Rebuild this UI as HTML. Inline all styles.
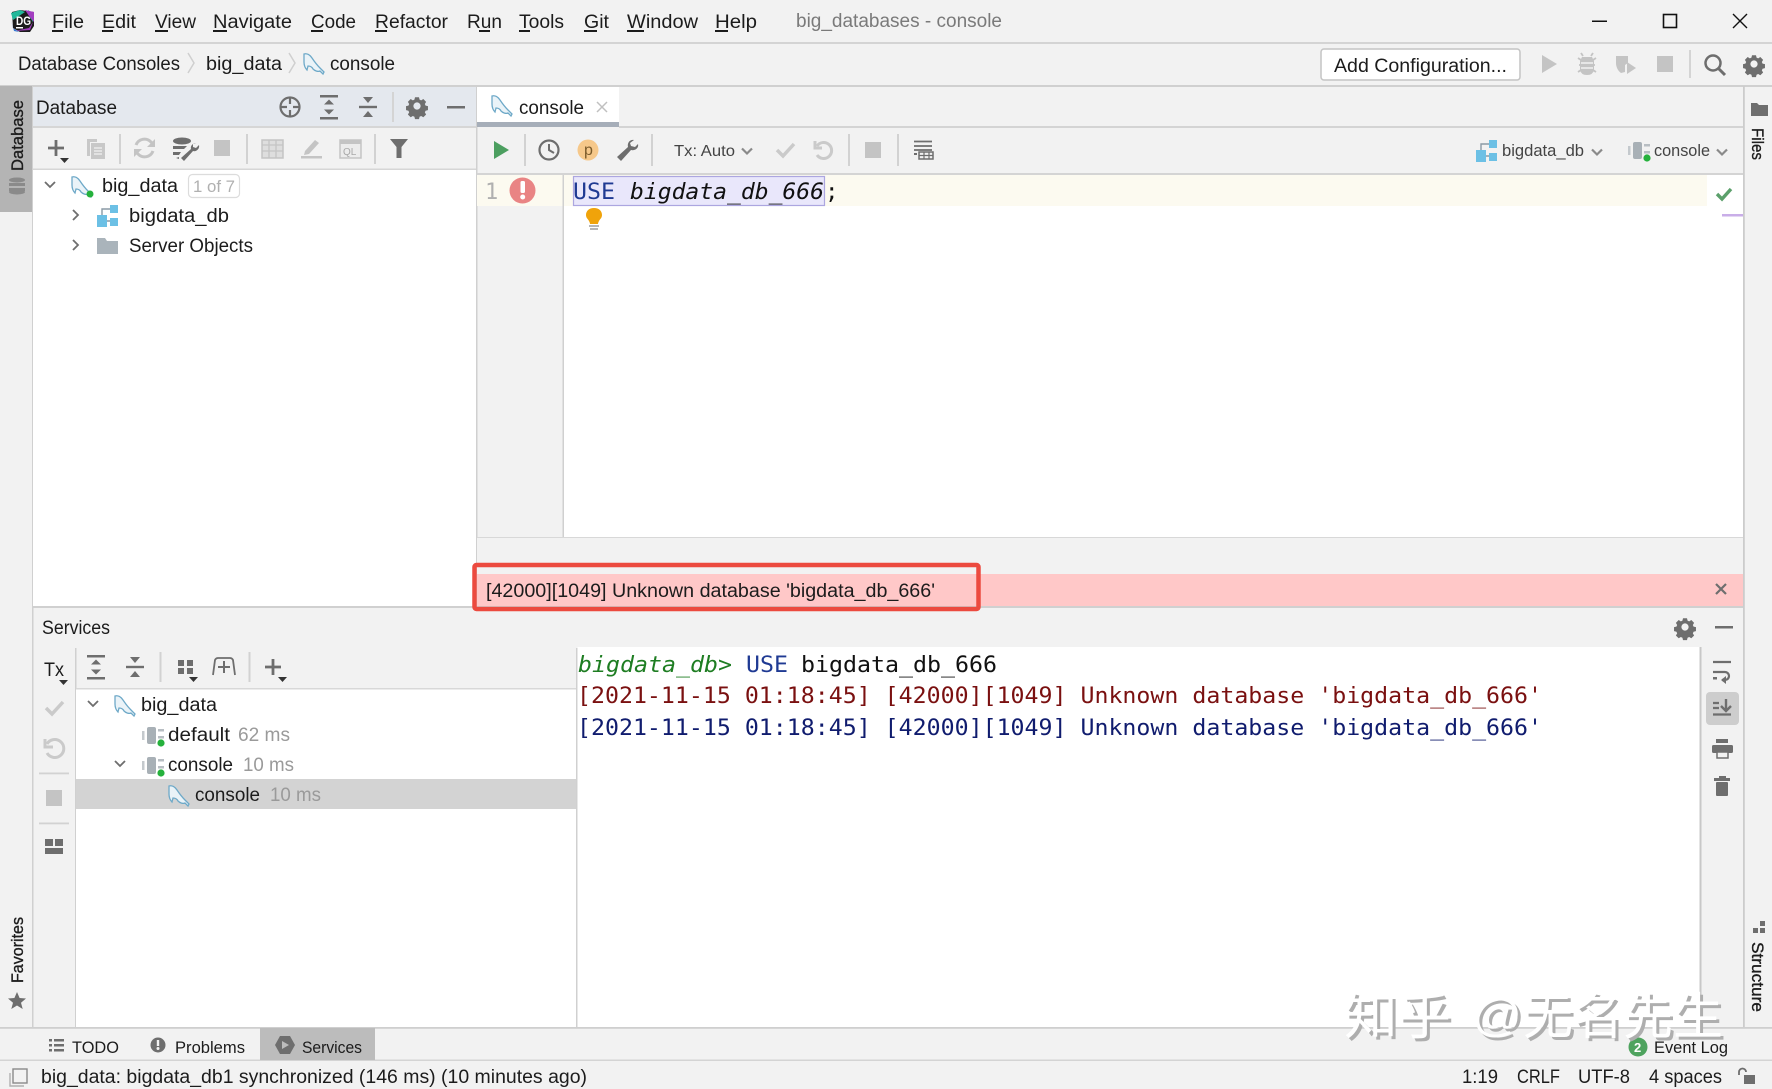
<!DOCTYPE html>
<html><head><meta charset="utf-8"><title>big_databases - console</title>
<style>
html,body{margin:0;padding:0;background:#f2f2f2;overflow:hidden}
svg{display:block}
text{font-family:"Liberation Sans","Noto Sans CJK SC",sans-serif;font-size:19px;fill:#1c1c1c}
.m{font-family:"DejaVu Sans Mono","Liberation Mono",monospace;font-size:22.5px}
.g{fill:#9a9a9a}
.s{font-size:17px}
.v{font-size:17px;stroke:#1c1c1c;stroke-width:.35}
.sp{fill:#d2d2d2}
</style></head><body>
<svg xmlns="http://www.w3.org/2000/svg" width="1772" height="1089" viewBox="0 0 1772 1089">
<defs>
<g id="dol"><path d="M1 1c3-1 6 1 8 4 2 3 5 7 8 10l4 4-1 2-3-3c-2 1-5 0-7-2-1-2-3-3-5-3l-1 4c-2-2-3-5-3-8 0-3 0-6 0-8z" fill="#eaf3f8" stroke="#6ea9c8" stroke-width="1.300"/></g>
<g id="conn"><rect x="6" y="0" width="9" height="17" rx="2" fill="#a8b0b6"/><rect x="1" y="4" width="2.500" height="9" fill="#c4c9cd"/><rect x="17" y="2" width="6" height="2.500" fill="#b8bec3"/><rect x="17" y="9" width="6" height="2.500" fill="#b8bec3"/><circle cx="20" cy="16" r="3.600" fill="#25b13c"/></g>
<g id="sch"><rect x="0" y="10" width="10" height="12" fill="#6cc0e5"/><rect x="13" y="0" width="8" height="8" fill="#6cc0e5"/><rect x="13" y="13" width="8" height="8" fill="#6cc0e5"/><path d="M5 10V4h8M10 16h3" stroke="#8a9aa5" stroke-width="1.400" fill="none"/></g>
<g id="gear"><path transform="scale(.8)" fill-rule="evenodd" d="M-2.500-11h5l.7 3 2 .9 2.700-1.600 3.500 3.500-1.600 2.700.9 2 3 .7v5l-3 .7-.9 2 1.600 2.700-3.500 3.500-2.700-1.600-2 .9-.7 3h-5l-.7-3-2-.9-2.700 1.600-3.500-3.500 1.600-2.700-.9-2-3-.7v-5l3-.7.9-2-1.600-2.700 3.500-3.500 2.700 1.600 2-.9zM0-4.500a4.500 4.500 0 1 0 .01 0z" fill="#6e6e6e"/></g>
<g id="exp" fill="#6e6e6e"><rect x="-9" y="-12" width="18" height="2.500"/><rect x="-9" y="10" width="18" height="2.500"/><path d="M0-7.500l5 5h-10zM0 7.500l5-5h-10z"/></g>
<g id="col" fill="#6e6e6e"><rect x="-9" y="-1.200" width="18" height="2.400"/><path d="M-5-10h10l-5 6zM-5 10h10l-5-6z"/></g>
<g id="chd"><path d="M-5-3l5 5 5-5" fill="none" stroke="#6e6e6e" stroke-width="1.800"/></g>
<g id="chr"><path d="M-3-5l5 5-5 5" fill="none" stroke="#6e6e6e" stroke-width="1.800"/></g>
<g id="chs"><path d="M-5-2.500l5 5 5-5" fill="none" stroke="#8a8a8a" stroke-width="2.200"/></g>
</defs>

<rect width="1772" height="1089" fill="#f2f2f2"/>

<!-- title bar -->
<rect x="0" y="42" width="1772" height="2" fill="#d4d4d4"/>
<path d="M12 12l8-2 14 2 0 14-4 6-10 0-7-4z" fill="#1c1c1c"/>
<path d="M11 13l9-3 5 2-12 8zM28 10l6 4-1 8-4-6z" fill="#22b89a"/><path d="M25 10l9 2 0 10-5-6zM14 31l16-1 3-8-4 6z" fill="#a23dc0"/><path d="M11 20l2 8 6 4-5-1z" fill="#3a7bd5"/>
<text x="16" y="25" style="font-size:11.500px;font-weight:bold;fill:#fff" textLength="15" lengthAdjust="spacingAndGlyphs">DG</text><rect x="16" y="27" width="7" height="1.500" fill="#fff"/>

<text x="52" y="28" textLength="32" lengthAdjust="spacingAndGlyphs">File</text><rect x="52" y="30" width="11" height="2" fill="#1c1c1c"/>
<text x="102" y="28" textLength="34" lengthAdjust="spacingAndGlyphs">Edit</text><rect x="102" y="30" width="11" height="2" fill="#1c1c1c"/>
<text x="155" y="28" textLength="41" lengthAdjust="spacingAndGlyphs">View</text><rect x="155" y="30" width="13" height="2" fill="#1c1c1c"/>
<text x="213" y="28" textLength="79" lengthAdjust="spacingAndGlyphs">Navigate</text><rect x="213" y="30" width="14" height="2" fill="#1c1c1c"/>
<text x="311" y="28" textLength="45" lengthAdjust="spacingAndGlyphs">Code</text><rect x="311" y="30" width="12" height="2" fill="#1c1c1c"/>
<text x="375" y="28" textLength="73" lengthAdjust="spacingAndGlyphs">Refactor</text><rect x="375" y="30" width="12" height="2" fill="#1c1c1c"/>
<text x="467" y="28" textLength="35" lengthAdjust="spacingAndGlyphs">Run</text><rect x="479" y="30" width="11" height="2" fill="#1c1c1c"/>
<text x="519" y="28" textLength="45" lengthAdjust="spacingAndGlyphs">Tools</text><rect x="519" y="30" width="11" height="2" fill="#1c1c1c"/>
<text x="584" y="28" textLength="25" lengthAdjust="spacingAndGlyphs">Git</text><rect x="584" y="30" width="13" height="2" fill="#1c1c1c"/>
<text x="627" y="28" textLength="71" lengthAdjust="spacingAndGlyphs">Window</text><rect x="627" y="30" width="17" height="2" fill="#1c1c1c"/>
<text x="715" y="28" textLength="42" lengthAdjust="spacingAndGlyphs">Help</text><rect x="715" y="30" width="13" height="2" fill="#1c1c1c"/>
<text x="796" y="27" textLength="206" lengthAdjust="spacingAndGlyphs" style="fill:#7a7a7a">big_databases - console</text>

<rect x="1592" y="20.500" width="15" height="1.500" fill="#111"/>
<rect x="1663.500" y="14.500" width="13" height="13" fill="none" stroke="#111" stroke-width="1.600"/>
<path d="M1733 14l14 14M1747 14l-14 14" stroke="#111" stroke-width="1.400"/>

<!-- breadcrumb -->
<text x="18" y="70" textLength="162" lengthAdjust="spacingAndGlyphs">Database Consoles</text>
<path d="M188 53l6 10-6 10" fill="none" stroke="#cfcfcf" stroke-width="1.500"/>
<text x="206" y="70" textLength="76" lengthAdjust="spacingAndGlyphs">big_data</text>
<path d="M289 53l6 10-6 10" fill="none" stroke="#cfcfcf" stroke-width="1.500"/>
<use href="#dol" x="303" y="53"/>
<text x="330" y="70" textLength="65" lengthAdjust="spacingAndGlyphs">console</text>

<rect x="1321" y="49" width="199" height="31" rx="3" fill="#fff" stroke="#c4c4c4" stroke-width="1.500"/>
<text x="1334" y="72" textLength="173" lengthAdjust="spacingAndGlyphs">Add Configuration...</text>
<path d="M1542 55l15 9-15 9z" fill="#c4c4c4"/>
<path d="M1583 56l-2-3M1591 56l2-3M1581 60l-3-2M1593 60l3-2M1579 65h4M1591 65h4M1581 70l-3 2M1593 70l3 2" stroke="#c4c4c4" stroke-width="1.800"/><path d="M1582 57h10l2 4v9q-1 5-7 5t-7-5v-9z" fill="#c4c4c4"/><path d="M1581 63h12M1581 68h12" stroke="#f2f2f2" stroke-width="1.500"/>
<path d="M1616 56h12v7l-3 2v7l-4 1c-3-2-5-6-5-10z" fill="#c4c4c4"/><path d="M1627 62l9 6-9 6z" fill="#c4c4c4"/>
<rect x="1657" y="56" width="16" height="16" fill="#c4c4c4"/>
<rect x="1689" y="50" width="2" height="28" fill="#d4d4d4"/>
<circle cx="1713" cy="63" r="7.500" fill="none" stroke="#6e6e6e" stroke-width="2.500"/><path d="M1718 68l7 7" stroke="#6e6e6e" stroke-width="3"/>
<use href="#gear" x="1754" y="64"/>
<rect x="0" y="85" width="1772" height="2" fill="#d0d0d0"/>

<!-- left strip -->
<rect x="0" y="86" width="33" height="126" fill="#b4b4b4"/>
<rect x="32" y="86" width="1.500" height="942" fill="#d0d0d0"/>
<text class="v" transform="translate(23,171) rotate(-90)" textLength="71" lengthAdjust="spacingAndGlyphs">Database</text>
<g fill="#8a8a8a"><ellipse cx="17" cy="180" rx="8" ry="2.500"/><rect x="9" y="183" width="16" height="3"/><rect x="9" y="188" width="16" height="3"/><ellipse cx="17" cy="192" rx="8" ry="2.500"/></g>
<text class="v" transform="translate(23,983) rotate(-90)" textLength="66" lengthAdjust="spacingAndGlyphs">Favorites</text>
<path d="M17 992l2.600 6 6.400.5-5 4.200 1.700 6.300-5.700-3.500-5.700 3.500 1.700-6.300-5-4.200 6.400-.5z" fill="#6e6e6e"/>

<!-- database panel -->
<rect x="33" y="87" width="443" height="40" fill="#e4e8ee"/>
<rect x="33" y="126" width="443" height="2" fill="#d6d6d6"/>
<text x="36" y="114" textLength="81" lengthAdjust="spacingAndGlyphs">Database</text>
<circle cx="290" cy="107" r="9.500" fill="none" stroke="#6e6e6e" stroke-width="2.200"/><path d="M290 97v7M290 110v7M280 107h7M293 107h7" stroke="#6e6e6e" stroke-width="2.200"/>
<use href="#exp" x="329" y="107"/><use href="#col" x="368" y="107"/>
<rect x="392" y="92" width="2" height="30" fill="#d4d4d4"/>
<use href="#gear" x="417" y="106"/>
<rect x="447" y="106" width="18" height="2.500" fill="#6e6e6e"/>

<rect x="33" y="128" width="443" height="41" fill="#f2f2f2"/>
<rect x="33" y="168.500" width="443" height="1.500" fill="#d6d6d6"/>
<path d="M48 148h16M56 140v16" stroke="#6e6e6e" stroke-width="2.800"/><path d="M60 158h9l-4.500 5z" fill="#333"/>
<path d="M87 139h10v3h-7v14h-3z" fill="#c8c8c8"/><rect x="91" y="143" width="14" height="16" fill="#c8c8c8"/><path d="M94 148h8M94 151h8M94 154h8" stroke="#f2f2f2" stroke-width="1.200"/>
<rect x="119" y="134" width="2" height="30" class="sp"/>
<path d="M136 145a9 9 0 0 1 15-3l2 2M153 151a9 9 0 0 1-15 3l-2-2" fill="none" stroke="#c4c4c4" stroke-width="3"/><path d="M155 139v8h-8zM134 157v-8h8z" fill="#c4c4c4"/>
<ellipse cx="182" cy="141" rx="9" ry="3.500" fill="#6e6e6e"/><path d="M173 146l14 0-3 3h-11zM173 152l8 0-2 3h-6zM176 158l3-1 0 2z" fill="#6e6e6e"/>
<path d="M196 143c-3 0-6 3-5 6l-10 9 3 3 9-10c3 1 7-2 6-6l-3 3-3-1 0-3z" fill="#6e6e6e"/>
<rect x="214" y="140" width="16" height="16" fill="#c4c4c4"/>
<rect x="246" y="134" width="2" height="30" class="sp"/>
<rect x="262" y="140" width="21" height="18" fill="#dedede" stroke="#c4c4c4" stroke-width="1.500"/><path d="M262 145h21M262 151h21M269 140v18M276 140v18" stroke="#c4c4c4" stroke-width="1.300"/>
<path d="M305 151l10-11 4 3-10 11-5 1z" fill="#c4c4c4"/><rect x="301" y="156" width="21" height="2.500" fill="#c4c4c4"/>
<rect x="340" y="140" width="21" height="18" fill="#ececec" stroke="#c4c4c4" stroke-width="1.500"/><rect x="340" y="140" width="21" height="4" fill="#c4c4c4"/><text x="343" y="155" style="font-size:10px;fill:#a8a8a8">QL</text>
<rect x="374" y="134" width="2" height="30" class="sp"/>
<path d="M390 139h18l-6.500 8v11h-5v-11z" fill="#6e6e6e"/>

<rect x="33" y="170" width="443" height="436" fill="#fff"/>
<use href="#chd" x="50" y="185"/>
<use href="#dol" x="71" y="176"/><circle cx="90" cy="194" r="3.500" fill="#25b13c"/>
<text x="102" y="192" textLength="76" lengthAdjust="spacingAndGlyphs">big_data</text>
<rect x="188.500" y="174.500" width="51" height="23" rx="4" fill="#fff" stroke="#dcdcdc" stroke-width="1.200"/>
<text x="193" y="192" textLength="42" lengthAdjust="spacingAndGlyphs" style="font-size:17px;fill:#b0b0b0">1 of 7</text>
<use href="#chr" x="76" y="215"/><use href="#sch" x="97" y="205"/>
<text x="129" y="222" textLength="100" lengthAdjust="spacingAndGlyphs">bigdata_db</text>
<use href="#chr" x="76" y="245"/>
<path d="M97 238h8l2 3h11v13h-21z" fill="#aab4bb"/>
<text x="129" y="252" textLength="124" lengthAdjust="spacingAndGlyphs">Server Objects</text>

<!-- vertical divider -->
<rect x="476" y="86" width="1.500" height="521" fill="#d0d0d0"/>

<!-- editor tabs -->
<rect x="477" y="87" width="142" height="36" fill="#fff"/>
<rect x="477" y="122" width="142" height="5" fill="#a6aeb9"/>
<rect x="619" y="126" width="1125" height="2" fill="#d4d4d4"/>
<use href="#dol" x="491" y="95"/>
<text x="519" y="114" textLength="65" lengthAdjust="spacingAndGlyphs">console</text>
<path d="M597 102l10 10M607 102l-10 10" stroke="#c0c0c0" stroke-width="1.500"/>

<!-- editor toolbar -->
<path d="M494 141l15 9-15 9z" fill="#4c9f60"/>
<rect x="524" y="134" width="2" height="32" class="sp"/>
<circle cx="549" cy="150" r="9.500" fill="none" stroke="#6e6e6e" stroke-width="2.200"/><path d="M549 144v6l5 3" fill="none" stroke="#6e6e6e" stroke-width="2"/>
<circle cx="588" cy="150" r="10.500" fill="#f6c88a"/><text x="584" y="155" style="font-size:16px;fill:#7a5a2a">p</text>
<path d="M634 140c-4-1-7 3-6 7l-11 10 4 4 10-11c4 1 8-2 7-6l-3 3-4-1-1-3z" fill="#6e6e6e"/>
<rect x="651" y="134" width="2" height="32" class="sp"/>
<text x="674" y="156" textLength="61" lengthAdjust="spacingAndGlyphs" style="font-size:16px;fill:#444">Tx: Auto</text>
<use href="#chs" x="747" y="151"/>
<path d="M777 150l6 6 11-12" fill="none" stroke="#cacaca" stroke-width="3.500"/>
<path d="M817 146a8 8 0 1 1 0 9M815 141v7h7" fill="none" stroke="#cacaca" stroke-width="3"/>
<rect x="848" y="134" width="2" height="32" class="sp"/>
<rect x="865" y="142" width="16" height="16" fill="#c4c4c4"/>
<rect x="897" y="134" width="2" height="32" class="sp"/>
<path d="M914 141.500h18M914 146h18M914 150h18" stroke="#6e6e6e" stroke-width="1.800"/><rect x="919" y="152" width="14" height="7" fill="none" stroke="#6e6e6e" stroke-width="1.500"/><path d="M924 152v7M929 152v7M919 155.500h14" stroke="#6e6e6e" stroke-width="1.200"/><rect x="914" y="153" width="3" height="2" fill="#6e6e6e"/>
<use href="#sch" x="1476" y="140"/>
<text x="1502" y="156" textLength="82" lengthAdjust="spacingAndGlyphs" style="font-size:17px;fill:#444">bigdata_db</text>
<use href="#chs" x="1597" y="152"/>
<use href="#conn" x="1627" y="142"/>
<text x="1654" y="156" textLength="56" lengthAdjust="spacingAndGlyphs" style="font-size:17px;fill:#444">console</text>
<use href="#chs" x="1722" y="152"/>
<rect x="477" y="173" width="1267" height="2" fill="#d4d4d4"/>

<!-- editor -->
<rect x="564" y="175" width="1180" height="363" fill="#fff"/>
<rect x="477" y="175" width="1230" height="31" fill="#fcfaf0"/>
<rect x="562.500" y="175" width="1.500" height="363" fill="#d0d0d0"/>
<text x="485" y="199" style="font-size:22px;fill:#b0b0b0;font-family:'DejaVu Sans Mono',monospace">1</text>
<circle cx="522.500" cy="190.500" r="13" fill="#e98484"/><rect x="520.500" y="181" width="4.500" height="12" rx="1.500" fill="#fff"/><circle cx="522.700" cy="197" r="2.500" fill="#fff"/>
<rect x="573.500" y="176.500" width="251" height="29" fill="#e9e7fb" stroke="#aca6e0" stroke-width="1.200"/>
<text class="m" x="573" y="199" textLength="42" lengthAdjust="spacingAndGlyphs" style="fill:#1f3a93">USE</text>
<text class="m" x="630" y="199" textLength="194" lengthAdjust="spacingAndGlyphs" style="font-style:italic;fill:#111">bigdata_db_666</text>
<text class="m" x="825" y="199" style="fill:#111">;</text>
<path d="M594 208c5 0 8 3 8 7 0 3-2 4-3 6-.5 1-1 2-1 3h-8c0-1-.5-2-1-3-1-2-3-3-3-6 0-4 3-7 8-7z" fill="#f0a30a"/><path d="M589 226h10M590 229h8" stroke="#8a8a8a" stroke-width="1.300"/>
<path d="M1717 194l5 5 9-10" fill="none" stroke="#5ba06b" stroke-width="3.400"/>
<rect x="1722" y="214" width="22" height="2.500" fill="#c9aee8"/>

<!-- editor footer & error -->
<rect x="477" y="537" width="1267" height="1.500" fill="#d8d8d8"/>
<rect x="477" y="538" width="1267" height="36" fill="#f2f2f2"/>
<rect x="477" y="574" width="1267" height="32" fill="#ffc8c8"/>
<rect x="33" y="606" width="1711" height="2" fill="#d0d0d0"/>
<rect x="474.500" y="565" width="504" height="44" rx="2" fill="none" stroke="#ec4a3f" stroke-width="4.500"/>
<text x="486" y="597" textLength="449" lengthAdjust="spacingAndGlyphs">[42000][1049] Unknown database 'bigdata_db_666'</text>
<path d="M1716 584l10 10M1726 584l-10 10" stroke="#6e6e6e" stroke-width="2.200"/>

<!-- services -->
<text x="42" y="634" textLength="68" lengthAdjust="spacingAndGlyphs">Services</text>
<use href="#gear" x="1685" y="627"/>
<rect x="1715" y="626" width="18" height="2.500" fill="#6e6e6e"/>

<rect x="75" y="648" width="1.500" height="380" fill="#d0d0d0"/>
<text x="44" y="676" textLength="20" lengthAdjust="spacingAndGlyphs">Tx</text><path d="M59 680h9l-4.500 5z" fill="#333"/>
<path d="M46 708l6 6 11-12" fill="none" stroke="#cacaca" stroke-width="3.500"/>
<path d="M47 744a9 9 0 1 1 0 9M45 739v8h8" fill="none" stroke="#cacaca" stroke-width="3"/>
<rect x="39" y="772.500" width="30" height="1.800" fill="#d2d2d2"/>
<rect x="46" y="790" width="16" height="16" fill="#c4c4c4"/>
<rect x="39" y="822.500" width="30" height="1.800" fill="#d2d2d2"/>
<path d="M45 839h8v7h-8zM55 839h8v7h-8zM45 848h18v6h-18z" fill="#6e6e6e"/>

<rect x="76" y="688" width="500" height="1.500" fill="#d8d8d8"/>
<use href="#exp" x="96" y="667"/><use href="#col" x="135" y="667"/>
<rect x="159.500" y="652" width="2" height="30" class="sp"/>
<path d="M178 660h6v6h-6zM187 660h6v6h-6zM178 668h6v6h-6zM187 668h6v6h-6z" fill="#6e6e6e"/><path d="M189 677h9l-4.500 5z" fill="#333"/>
<path d="M213 675l2-15q1-2 3-2h12q2 0 3 2l2 15" fill="none" stroke="#6e6e6e" stroke-width="1.800"/><path d="M218 667h12M224 661v12" stroke="#6e6e6e" stroke-width="2"/>
<rect x="248.500" y="652" width="2" height="30" class="sp"/>
<path d="M265 667h16M273 659v16" stroke="#6e6e6e" stroke-width="2.800"/><path d="M278 677h9l-4.500 5z" fill="#333"/>

<rect x="76" y="689.500" width="500" height="338.500" fill="#fff"/>
<rect x="76" y="779" width="500" height="30" fill="#d3d3d3"/>
<use href="#chd" x="93" y="704"/>
<use href="#dol" x="114" y="695"/>
<text x="141" y="711" textLength="76" lengthAdjust="spacingAndGlyphs">big_data</text>
<use href="#conn" x="141" y="727"/>
<text x="168" y="741" textLength="62" lengthAdjust="spacingAndGlyphs">default</text>
<text class="g" x="238" y="741" textLength="52" lengthAdjust="spacingAndGlyphs">62 ms</text>
<use href="#chd" x="120" y="764"/>
<use href="#conn" x="141" y="757"/>
<text x="168" y="771" textLength="65" lengthAdjust="spacingAndGlyphs">console</text>
<text class="g" x="243" y="771" textLength="51" lengthAdjust="spacingAndGlyphs">10 ms</text>
<use href="#dol" x="168" y="785"/>
<text x="195" y="801" textLength="65" lengthAdjust="spacingAndGlyphs">console</text>
<text class="g" x="270" y="801" textLength="51" lengthAdjust="spacingAndGlyphs">10 ms</text>

<!-- console -->
<rect x="576" y="648" width="1.500" height="380" fill="#d0d0d0"/>
<rect x="577.500" y="647" width="1122.500" height="381" fill="#fff"/>
<rect x="1699.500" y="647" width="2" height="381" fill="#c8c8c8"/>
<text class="m" x="578" y="672" textLength="154" lengthAdjust="spacingAndGlyphs" style="font-style:italic;fill:#1e7d22">bigdata_db&gt;</text>
<text class="m" x="746" y="672" textLength="42" lengthAdjust="spacingAndGlyphs" style="fill:#1f3a93">USE</text>
<text class="m" x="801" y="672" textLength="196" lengthAdjust="spacingAndGlyphs" style="fill:#111">bigdata_db_666</text>
<text class="m" x="577" y="703" textLength="965" lengthAdjust="spacingAndGlyphs" style="fill:#7a1010">[2021-11-15 01:18:45] [42000][1049] Unknown database 'bigdata_db_666'</text>
<text class="m" x="577" y="735" textLength="965" lengthAdjust="spacingAndGlyphs" style="fill:#101c6e">[2021-11-15 01:18:45] [42000][1049] Unknown database 'bigdata_db_666'</text>

<!-- console right toolbar -->
<path d="M1713 662h18M1713 672h12a4 4 0 0 1 0 8h-3" fill="none" stroke="#6e6e6e" stroke-width="2.200"/><path d="M1721 680l5-4v8z" fill="#6e6e6e"/><rect x="1713" y="677" width="4" height="2.500" fill="#6e6e6e"/>
<rect x="1706" y="692" width="33" height="33" rx="4" fill="#cdcdcd"/>
<path d="M1713 703h6M1713 708h6M1713 714.500h18" stroke="#6e6e6e" stroke-width="2.200"/><path d="M1726 699v11M1721 706l5 5 5-5" fill="none" stroke="#6e6e6e" stroke-width="2.400"/>
<rect x="1716" y="739" width="12" height="4" fill="#6e6e6e"/><rect x="1712" y="745" width="21" height="8" rx="1.500" fill="#6e6e6e"/><rect x="1717" y="752" width="11" height="6" fill="#f2f2f2" stroke="#6e6e6e" stroke-width="1.500"/>
<rect x="1719" y="776" width="7" height="3" fill="#6e6e6e"/><rect x="1714" y="778" width="16" height="3" fill="#6e6e6e"/><rect x="1716" y="782" width="12" height="14" rx="1" fill="#6e6e6e"/>

<!-- right strip -->
<rect x="1743" y="86" width="1.800" height="942" fill="#cccccc"/>
<path d="M1751 103h6l2 2h9v11h-17z" fill="#6e6e6e"/>
<text class="v" transform="translate(1752,128) rotate(90)" textLength="32" lengthAdjust="spacingAndGlyphs">Files</text>
<path d="M1753 928h5v5h-5zM1760 928h5v5h-5zM1760 921h5v5h-5z" fill="#6e6e6e"/>
<text class="v" transform="translate(1752,942) rotate(90)" textLength="70" lengthAdjust="spacingAndGlyphs">Structure</text>

<!-- bottom tool strip -->
<rect x="0" y="1027" width="1772" height="1.800" fill="#cfcfcf"/>
<rect x="0" y="1059.500" width="1772" height="1.500" fill="#d4d4d4"/>
<rect x="260" y="1028" width="115" height="32" fill="#bcbcbc"/>
<path d="M49 1039h3v2.500h-3zM54 1039h10v2.500h-10zM49 1044h3v2.500h-3zM54 1044h10v2.500h-10zM49 1049h3v2.500h-3zM54 1049h10v2.500h-10z" fill="#6e6e6e"/>
<text class="s" x="72" y="1053" textLength="47" lengthAdjust="spacingAndGlyphs">TODO</text>
<circle cx="158" cy="1045" r="7.500" fill="#6e6e6e"/><rect x="156.800" y="1040" width="2.400" height="6" fill="#f2f2f2"/><circle cx="158" cy="1048.500" r="1.500" fill="#f2f2f2"/>
<text class="s" x="175" y="1053" textLength="70" lengthAdjust="spacingAndGlyphs">Problems</text>
<path d="M280 1036h10l5 9-5 9h-10l-5-9z" fill="#6e6e6e"/><path d="M282 1041l7 4-7 4z" fill="#bcbcbc"/>
<text class="s" x="302" y="1053" textLength="60" lengthAdjust="spacingAndGlyphs">Services</text>
<circle cx="1638" cy="1047" r="9.500" fill="#4ea35e"/><text x="1634" y="1052" style="font-size:13px;font-weight:bold;fill:#fff">2</text>
<text class="s" x="1654" y="1053" textLength="74" lengthAdjust="spacingAndGlyphs">Event Log</text>

<!-- status -->
<rect x="13" y="1069" width="14" height="14" fill="none" stroke="#8a8a8a" stroke-width="1.400"/><path d="M10 1073v13h14" fill="none" stroke="#b0b0b0" stroke-width="1.400"/>
<text x="41" y="1083" textLength="546" lengthAdjust="spacingAndGlyphs">big_data: bigdata_db1 synchronized (146 ms) (10 minutes ago)</text>
<text x="1462" y="1083" textLength="36" lengthAdjust="spacingAndGlyphs">1:19</text>
<text x="1517" y="1083" textLength="43" lengthAdjust="spacingAndGlyphs">CRLF</text>
<text x="1578" y="1083" textLength="52" lengthAdjust="spacingAndGlyphs">UTF-8</text>
<text x="1649" y="1083" textLength="73" lengthAdjust="spacingAndGlyphs">4 spaces</text>
<path d="M1739 1075v-3a3.500 3.500 0 0 1 7 0" fill="none" stroke="#6e6e6e" stroke-width="1.800"/><rect x="1744" y="1075" width="11" height="9" fill="#6e6e6e"/>

<!-- watermark -->
<text x="1347" y="1037" textLength="107" lengthAdjust="spacingAndGlyphs" style="font-size:50px;fill:#aeaeae">知乎</text>
<text x="1475" y="1034" textLength="50" lengthAdjust="spacingAndGlyphs" style="font-size:46px;fill:#aeaeae">@</text>
<text x="1526" y="1037" textLength="200" lengthAdjust="spacingAndGlyphs" style="font-size:50px;fill:#aeaeae">无名先生</text>
<text x="1344" y="1034" textLength="107" lengthAdjust="spacingAndGlyphs" style="font-size:50px;fill:#fff">知乎</text>
<text x="1472" y="1031" textLength="50" lengthAdjust="spacingAndGlyphs" style="font-size:46px;fill:#fff">@</text>
<text x="1523" y="1034" textLength="200" lengthAdjust="spacingAndGlyphs" style="font-size:50px;fill:#fff">无名先生</text>
</svg>
</body></html>
